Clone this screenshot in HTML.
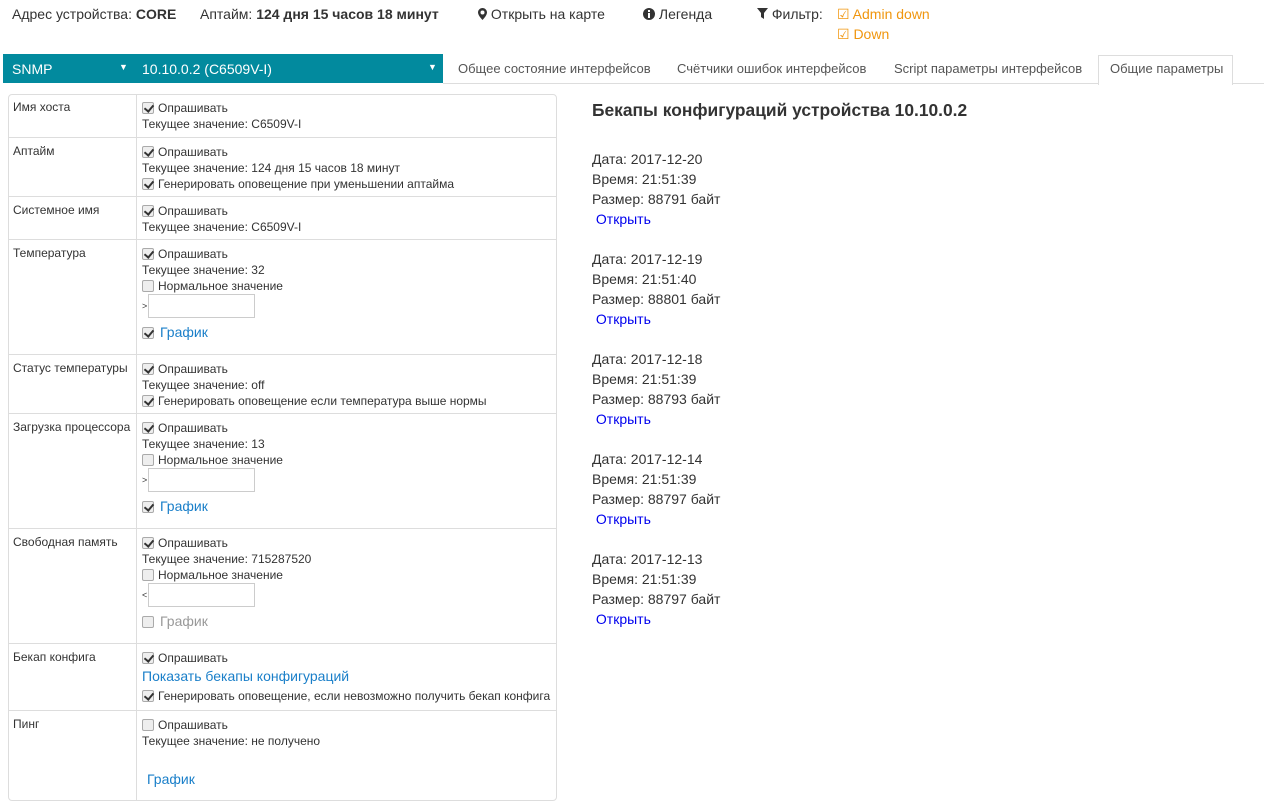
<!DOCTYPE html>
<html><head><meta charset="utf-8"><style>
*{box-sizing:border-box}
body{margin:0;width:1264px;height:810px;background:#fff;font-family:"Liberation Sans",sans-serif;color:#333;position:relative;overflow:hidden}
.a{position:absolute;white-space:nowrap}
.t14{font-size:14px}
.t12{font-size:12px}
.cb{display:inline-block;width:12px;height:12px;border:1px solid #aaa;border-radius:2px;background:#eee;vertical-align:-2px;margin-right:4px;position:relative}
.cb.c::after{content:"";position:absolute;left:3px;top:0px;width:4px;height:7px;border:solid #333;border-width:0 2px 2px 0;transform:rotate(40deg)}
.row{position:absolute;left:8px;width:549px;border-top:1px solid #ddd}
.lbl{position:absolute;left:5px;top:6px;font-size:12px}
.val{position:absolute;left:134px;top:6px;font-size:12px;line-height:16px}
.inp{display:inline-block;width:107px;height:24px;border:1px solid #ccc;vertical-align:middle;margin-left:1px}
.lnk{color:#1a7fc9;font-size:14px;margin-left:2px}
.blue{color:#0000ee}
</style></head><body>
<div class="a t14" style="left:12px;top:6px">Адрес устройства: <b>CORE</b></div>
<div class="a t14" style="left:200px;top:6px">Аптайм: <b>124 дня 15 часов 18 минут</b></div>
<div class="a t14" style="left:478px;top:6px"><svg width="9" height="12" viewBox="0 0 9 12" style="vertical-align:-1px"><path d="M4.5 0C2 0 0 2 0 4.5 0 7.5 4.5 12 4.5 12S9 7.5 9 4.5C9 2 7 0 4.5 0z M4.5 2.5a2 2 0 1 1 0 4a2 2 0 1 1 0-4z" fill="#333" fill-rule="evenodd"/></svg> Открыть на карте</div>
<div class="a t14" style="left:643px;top:6px"><svg width="12" height="12" viewBox="0 0 12 12" style="vertical-align:-1px"><circle cx="6" cy="6" r="6" fill="#333"/><rect x="5" y="5" width="2" height="5" fill="#fff"/><rect x="5" y="2" width="2" height="2" fill="#fff"/></svg> Легенда</div>
<div class="a t14" style="left:757px;top:6px"><svg width="11" height="11" viewBox="0 0 11 11"><path d="M0 0H11L7 5V11L4 9V5Z" fill="#333"/></svg> Фильтр:</div>
<div class="a t14" style="left:837px;top:4px;color:#f0960e;line-height:20px">&#9745; Admin down<br>&#9745; Down</div>

<div class="a" style="left:3px;top:54px;width:440px;height:29px;background:#028a9e;color:#fff;font-size:14px">
<span class="a" style="left:9px;top:7px">SNMP</span><span class="a" style="left:116px;top:8px;font-size:9px">&#9660;</span>
<span class="a" style="left:139px;top:7px">10.10.0.2 (C6509V-I)</span><span class="a" style="left:425px;top:8px;font-size:9px">&#9660;</span></div>
<div class="a" style="left:443px;top:83px;width:821px;border-top:1px solid #ddd"></div>
<div class="a" style="left:458px;top:61px;color:#555;font-size:13px">Общее состояние интерфейсов</div>
<div class="a" style="left:677px;top:61px;color:#555;font-size:13px">Счётчики ошибок интерфейсов</div>
<div class="a" style="left:894px;top:61px;color:#555;font-size:13px">Script параметры интерфейсов</div>
<div class="a" style="left:1098px;top:55px;width:135px;height:30px;border:1px solid #ddd;border-bottom:none;background:#fff;color:#555;font-size:13px;padding:5px 0 0 11px">Общие параметры</div>

<div class="a" style="left:8px;top:94px;width:549px;height:707px;border:1px solid #ddd;border-radius:4px"></div>
<div class="a" style="left:136px;top:95px;height:706px;border-left:1px solid #ddd"></div>

<div class="row" style="top:94px;border-top:none"><div class="lbl">Имя хоста</div><div class="val"><span class="cb c"></span>Опрашивать<br>Текущее значение: C6509V-I</div></div>
<div class="row" style="top:137px"><div class="lbl">Аптайм</div><div class="val"><span class="cb c"></span>Опрашивать<br>Текущее значение: 124 дня 15 часов 18 минут<br><span class="cb c"></span>Генерировать оповещение при уменьшении аптайма</div></div>
<div class="row" style="top:196px"><div class="lbl">Системное имя</div><div class="val"><span class="cb c"></span>Опрашивать<br>Текущее значение: C6509V-I</div></div>
<div class="row" style="top:239px"><div class="lbl">Температура</div><div class="val"><span class="cb c"></span>Опрашивать<br>Текущее значение: 32<br><span class="cb"></span>Нормальное значение<br><span style="font-size:9px">&gt;</span><span class="inp"></span><div style="margin-top:6px"><span class="cb c"></span><span class="lnk">График</span></div></div></div>
<div class="row" style="top:354px"><div class="lbl">Статус температуры</div><div class="val"><span class="cb c"></span>Опрашивать<br>Текущее значение: off<br><span class="cb c"></span>Генерировать оповещение если температура выше нормы</div></div>
<div class="row" style="top:413px"><div class="lbl">Загрузка процессора</div><div class="val"><span class="cb c"></span>Опрашивать<br>Текущее значение: 13<br><span class="cb"></span>Нормальное значение<br><span style="font-size:9px">&gt;</span><span class="inp"></span><div style="margin-top:6px"><span class="cb c"></span><span class="lnk">График</span></div></div></div>
<div class="row" style="top:528px"><div class="lbl">Свободная память</div><div class="val"><span class="cb c"></span>Опрашивать<br>Текущее значение: 715287520<br><span class="cb"></span>Нормальное значение<br><span style="font-size:9px">&lt;</span><span class="inp"></span><div style="margin-top:6px"><span class="cb"></span><span class="lnk" style="color:#999">График</span></div></div></div>
<div class="row" style="top:643px"><div class="lbl">Бекап конфига</div><div class="val"><span class="cb c"></span>Опрашивать<br><div style="margin:2px 0 3px"><span class="lnk" style="margin-left:0">Показать бекапы конфигураций</span></div><span class="cb c"></span>Генерировать оповещение, если невозможно получить бекап конфига</div></div>
<div class="row" style="top:710px"><div class="lbl">Пинг</div><div class="val"><span class="cb"></span>Опрашивать<br>Текущее значение: не получено<br><div style="margin:22px 0 0 3px"><span class="lnk">График</span></div></div></div>

<div class="a" style="left:592px;top:100px;font-size:17.4px;font-weight:bold">Бекапы конфигураций устройства 10.10.0.2</div>
<div class="a t14" style="left:592px;top:149px;line-height:20px">Дата: 2017-12-20<br>Время: 21:51:39<br>Размер: 88791 байт<br>&nbsp;<span class="blue">Открыть</span></div>
<div class="a t14" style="left:592px;top:249px;line-height:20px">Дата: 2017-12-19<br>Время: 21:51:40<br>Размер: 88801 байт<br>&nbsp;<span class="blue">Открыть</span></div>
<div class="a t14" style="left:592px;top:349px;line-height:20px">Дата: 2017-12-18<br>Время: 21:51:39<br>Размер: 88793 байт<br>&nbsp;<span class="blue">Открыть</span></div>
<div class="a t14" style="left:592px;top:449px;line-height:20px">Дата: 2017-12-14<br>Время: 21:51:39<br>Размер: 88797 байт<br>&nbsp;<span class="blue">Открыть</span></div>
<div class="a t14" style="left:592px;top:549px;line-height:20px">Дата: 2017-12-13<br>Время: 21:51:39<br>Размер: 88797 байт<br>&nbsp;<span class="blue">Открыть</span></div>
</body></html>
